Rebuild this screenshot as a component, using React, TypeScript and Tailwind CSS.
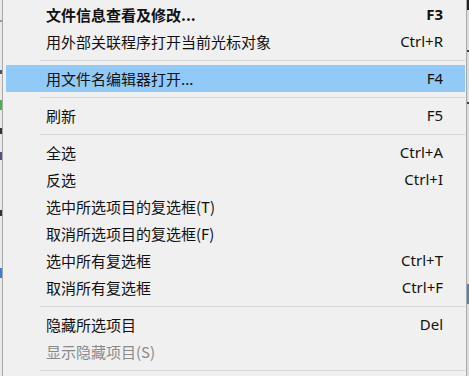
import React from "react";

type Item =
  | { kind: "item"; label: string; shortcut?: string; bold?: boolean; active?: boolean; disabled?: boolean }
  | { kind: "sep" };

const items: Item[] = [
  { kind: "item", label: "文件信息查看及修改...", shortcut: "F3", bold: true },
  { kind: "item", label: "用外部关联程序打开当前光标对象", shortcut: "Ctrl+R" },
  { kind: "sep" },
  { kind: "item", label: "用文件名编辑器打开...", shortcut: "F4", active: true },
  { kind: "sep" },
  { kind: "item", label: "刷新", shortcut: "F5" },
  { kind: "sep" },
  { kind: "item", label: "全选", shortcut: "Ctrl+A" },
  { kind: "item", label: "反选", shortcut: "Ctrl+I" },
  { kind: "item", label: "选中所选项目的复选框(T)" },
  { kind: "item", label: "取消所选项目的复选框(F)" },
  { kind: "item", label: "选中所有复选框", shortcut: "Ctrl+T" },
  { kind: "item", label: "取消所有复选框", shortcut: "Ctrl+F" },
  { kind: "sep" },
  { kind: "item", label: "隐藏所选项目", shortcut: "Del" },
  { kind: "item", label: "显示隐藏项目(S)", disabled: true },
  { kind: "sep" },
];

function LeftStrip() {
  return (
    <div className="flex w-[2px] flex-col bg-[#e9e9e9]">
      <div className="h-[20px]" />
      <div className="h-[2px] bg-[#9a9a9a]" />
      <div className="h-[48px]" />
      <div className="h-[4px] bg-[#555]" />
      <div className="h-[26px]" />
      <div className="h-[10px] bg-[#4caf50]" />
      <div className="h-[18px]" />
      <div className="h-[6px] bg-[#333]" />
      <div className="h-[18px]" />
      <div className="h-[8px] bg-[#5a4f7c]" />
      <div className="h-[50px]" />
      <div className="h-[6px] bg-[#333]" />
      <div className="h-[52px]" />
      <div className="h-[10px] bg-[#3b7dd8]" />
      <div className="flex-1" />
    </div>
  );
}

function RightStrip() {
  return (
    <div className="flex w-[2px] flex-col bg-[#dcdcdc]">
      <div className="h-[10px] bg-[#222]" />
      <div className="h-[40px]" />
      <div className="h-[2px] bg-[#444]" />
      <div className="h-[50px]" />
      <div className="h-[2px] bg-[#444]" />
      <div className="h-[180px]" />
      <div className="h-[20px] bg-[#5b7fb0]" />
      <div className="flex-1" />
    </div>
  );
}

export default function App() {
  return (
    <div
      className="flex h-[376px] w-[469px] overflow-hidden bg-[#f0f0f0]"
      style={{ fontFamily: '"Noto Sans", "Noto Sans CJK SC", sans-serif' }}
    >
      <LeftStrip />
      <div className="flex flex-1 flex-col border-x border-[#a8a8a8] bg-[#f0f0f0] pl-[3px] pr-[1px] pt-[1px]">
        {items.map((it, i) =>
          it.kind === "sep" ? (
            <div key={i} className="flex h-[10px] items-center pl-[34px]">
              <div className="h-[1px] flex-1 bg-[#d7d7d7]" />
            </div>
          ) : (
            <div
              key={i}
              className={
                "flex h-[27px] items-center justify-between pl-[40px] pr-[22px] text-[15px] leading-none " +
                (it.active ? "bg-[#91c9f7] " : "") +
                (it.disabled ? "text-[#8a8a8a] " : "text-[#111] ") +
                (it.bold ? "font-bold" : "")
              }
            >
              <span style={{ fontFamily: '"Noto Sans CJK SC", sans-serif' }}>{it.label}</span>
              {it.shortcut && <span>{it.shortcut}</span>}
            </div>
          )
        )}
      </div>
      <RightStrip />
    </div>
  );
}
